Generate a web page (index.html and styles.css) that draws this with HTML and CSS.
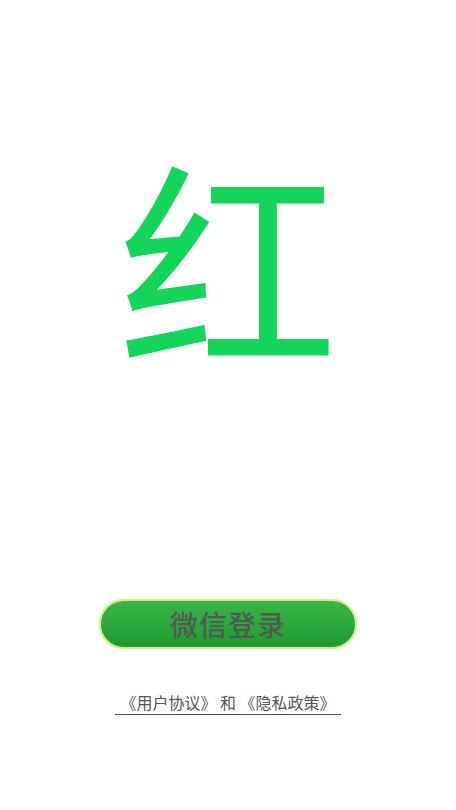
FILE: index.html
```html
<!DOCTYPE html>
<html lang="zh-CN">
<head>
    <meta charset="UTF-8">
    <meta name="viewport" content="width=device-width, initial-scale=1.0">
    <title>红</title>
    <link rel="stylesheet" href="styles.css">
</head>
<body>
    <div class="page">
        <div class="logo">红</div>
        <button class="login">微信登录</button>
        <a class="agreement" href="#">《用户协议》 和 《隐私政策》</a>
    </div>
</body>
</html>
```

FILE: styles.css
```css
body {
    margin: 0;
    background-color: #ffffff;
    font-family: "Noto Sans CJK SC", "Noto Sans", sans-serif;
}

.page {
    display: flex;
    flex-direction: column;
    align-items: center;
    height: 810px;
}

.logo {
    margin-top: 116px;
    font-size: 220px;
    line-height: 280px;
    color: #14d45a;
}

.login {
    margin-top: 203px;
    width: 258px;
    height: 50px;
    border: 2px solid #d6e98c;
    border-radius: 25px;
    background: linear-gradient(to bottom, #3ab548, #1f9a31);
    box-shadow: 0 0 2px #e6f0b0;
    color: #525a52;
    font-family: "Noto Sans CJK SC", sans-serif;
    font-size: 28px;
    font-weight: 500;
    letter-spacing: 1px;
    padding: 0;
}

.agreement {
    margin-top: 42px;
    padding: 0 5px 1px;
    font-size: 16px;
    line-height: 22px;
    color: #555555;
    text-decoration: none;
    border-bottom: 1px solid #555555;
}
```
